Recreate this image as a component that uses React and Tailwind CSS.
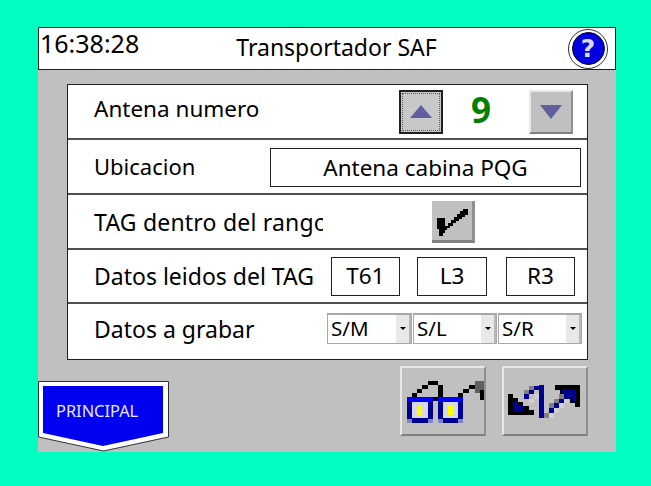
import React from "react";

const GlassesIcon = () => (
  <svg width="82" height="66" viewBox="2 2 82 66" shapeRendering="crispEdges">
    <path fill="#000" d="M28 15h10v4H28z M22 19h6v4h-6z M17 23h5v4h-5z M12 27h5v4h-5z M38 19h5v12h-5z M33 31h5v4h-5z M58 27h5v4h-5z M63 23h6v4h-6z M69 19h6v4h-6z" />
    <path fill="#606060" d="M75 15h9v9h-9z M75 24h5v3h-5z" />
    <path fill="#000" d="M80 24h4v10h-4z" />
    <path fill="#0000ff" d="M7 31h26v5H7z M38 31h25v5H38z" />
    <path fill="#000090" d="M7 36h5v17H7z M28 36h5v17h-5z M38 36h5v17h-5z M58 36h5v17h-5z M12 52h16v5H12z M43 52h15v5H43z" />
    <path fill="#7f86b8" d="M7 53h5v4H7z M28 53h5v4h-5z M38 53h5v4h-5z M58 53h5v4h-5z" />
    <path fill="#d4d8e8" d="M12 36h16v16H12z M43 36h15v16H43z" />
    <path fill="#ffff00" d="M17 40h5v9h-5z M48 40h6v9h-6z" />
  </svg>
);

const ArrowsIcon = () => (
  <svg width="82" height="66" viewBox="2 2 82 66" shapeRendering="crispEdges">
    <path fill="#000" d="M6 28h5v4h5v4h5v4h6v4h5v5H6z M53 19h25v22h-5v-4h-5v-4h-5v-4h-5v-5h-5v-5h-5z" />
    <path fill="#000090" d="M11 36h5v4h5v5H11z M60 23h14v12h-4v-4h-5v-4h-5z" />
    <path fill="#d0d0d0" d="M27 33h5v4h-5z M32 28h5v5h-5z M47 47h5v5h-5z M52 42h5v5h-5z M57 37h5v5h-5z M62 33h5v4h-5z" />
    <path fill="#808080" d="M22 24h5v4h-5z M27 20h5v4h-5z M42 47h5v5h-5z M47 37h5v5h-5z M52 33h5v4h-5z M57 28h5v5h-5z" />
    <path fill="#000090" d="M37 19h5v33h-5z M32 20h5v4h-5z M27 24h5v4h-5z M22 28h5v5h-5z M47 42h5v5h-5z M52 37h5v5h-5z M57 33h5v4h-5z M62 28h5v5h-5z" />
  </svg>
);

const CheckIcon = () => (
  <svg width="40" height="38" viewBox="0 0 40 38" shapeRendering="crispEdges">
    <path fill="#000" d="M5 17H13V25H16V22H19V19H22V16H25V13H28V10H31V8H36V14H33V16H30V18H27V20H24V22H21V25H18V27H15V29H13V32H11V35H7V28H5z" />
  </svg>
);

const HelpButton = () => (
  <div className="flex h-[40px] w-[40px] items-center justify-center rounded-full border border-[#303030] bg-white">
    <div
      className="flex h-[33px] w-[33px] items-center justify-center rounded-full border border-black bg-[#0000e0] text-[25px] font-bold leading-none text-[#dcdcf0]"
      style={{ fontFamily: '"DejaVu Sans", sans-serif' }}
    >
      ?
    </div>
  </div>
);

const RaisedButton = ({ className, children }) => (
  <div className={`flex items-center justify-center bg-[#c0c0c0] border-t-2 border-l-2 border-t-[#e8e8e8] border-l-[#e8e8e8] border-b-2 border-r-2 border-b-[#808080] border-r-[#909090] ${className}`}>
    {children}
  </div>
);

const Row = ({ label, labelClass, height = "h-[55px]", children, last }) => (
  <div className={`flex items-center pl-[26px] ${height} ${last ? "" : "border-b-2 border-b-[#505050]"}`}>
    <span className={`overflow-hidden whitespace-nowrap leading-[30px] ${labelClass}`}>{label}</span>
    {children}
  </div>
);

const ValueBox = ({ children, className }) => (
  <div className={`flex h-[39px] items-center justify-center border border-[#202020] bg-white text-[22.5px] ${className}`}>
    {children}
  </div>
);

const Combo = ({ value, className }) => (
  <div className={`flex h-[31px] items-stretch justify-between border border-t-2 border-[#a8a8a8] bg-white ${className}`}>
    <span className="pl-[3px] text-[20.5px] leading-[27px]">{value}</span>
    <div className="flex w-[15px] items-center justify-center border-r-2 border-r-[#b8b8b8] bg-[#e8e8e8]">
      <div className="h-0 w-0 border-x-[3px] border-t-[3px] border-x-transparent border-t-black" />
    </div>
  </div>
);

export default function App() {
  return (
    <div
      className="h-[486px] w-[651px] overflow-hidden bg-[#00ffc0] pl-[38px] pt-[27px] text-black"
      style={{ fontFamily: '"Noto Sans", "Liberation Sans", sans-serif' }}
    >
      <div className="flex h-[425px] w-[578px] flex-col bg-[#c0c0c0]">
        <div className="flex h-[43px] items-center border border-[#202020] bg-white">
          <span className="w-[150px] self-start pl-[1px] text-[25px] leading-[31px]">16:38:28</span>
          <span className="flex-1 pb-[2px] pl-[19px] text-center text-[23px]">Transportador SAF</span>
          <div className="flex w-[150px] justify-end pr-[7px]">
            <HelpButton />
          </div>
        </div>

        <div className="ml-[29px] mt-[14px] w-[521px] border border-[#202020] bg-white">
          <Row label="Antena numero" labelClass="w-[173px] pb-[5px] text-[22.5px]">
            <div className="ml-[132px] flex h-[44px] w-[44px] items-center justify-center border-2 border-[#202020] bg-[#c8c8c8] outline-1 -outline-offset-4 outline-dotted outline-[#606060]">
              <div className="h-0 w-0 border-x-[11px] border-b-[13px] border-x-transparent border-b-[#5f5f9f]" />
            </div>
            <span className="ml-[28px] w-[58px] pb-[5px] text-[35px] font-bold leading-none text-[#008000]">9</span>
            <RaisedButton className="h-[44px] w-[44px]">
              <div className="h-0 w-0 border-x-[11px] border-t-[14px] border-x-transparent border-t-[#5f5f9f]" />
            </RaisedButton>
          </Row>

          <Row label="Ubicacion" labelClass="w-[173px] pb-[2px] text-[22px]">
            <ValueBox className="ml-[3px] mt-[2px] w-[311px]">Antena cabina PQG</ValueBox>
          </Row>

          <Row label="TAG dentro del rango" labelClass="w-[229px] text-[23px] tracking-[0.2px]">
            <div className="ml-[109px] flex h-[42px] w-[43px] items-center justify-center border-b-[3px] border-r-[3px] border-b-[#808080] border-r-[#909090] bg-[#c0c0c0]">
              <CheckIcon />
            </div>
          </Row>

          <Row label="Datos leidos del TAG" labelClass="w-[237px] pb-[1px] text-[23px]" height="h-[54px]">
            <ValueBox className="w-[69px]">T61</ValueBox>
            <ValueBox className="ml-[17px] w-[70px]">L3</ValueBox>
            <ValueBox className="ml-[19px] w-[69px]">R3</ValueBox>
          </Row>

          <Row label="Datos a grabar" labelClass="w-[173px] pb-[5px] text-[23px]" last>
            <div className="mb-[7px] ml-[60px] flex gap-[1px]">
              <Combo value="S/M" className="w-[85px]" />
              <Combo value="S/L" className="w-[84px]" />
              <Combo value="S/R" className="w-[84px]" />
            </div>
          </Row>
        </div>

        <div className="flex flex-1 items-end justify-between pb-[16px]">
          <svg width="132" height="71" viewBox="0 0 132 71" className="mb-[-16px]">
            <path d="M0.5 0.5H130.5V56L65.5 70L0.5 56Z" fill="#fff" stroke="#303030" strokeWidth="1" />
            <path d="M5 5H125V52L65 65L5 52Z" fill="#0000f0" />
            <text x="18" y="35.5" fontSize="16.4" fill="#e8e8ff" fontFamily="Noto Sans">PRINCIPAL</text>
          </svg>
          <div className="mr-[28px] flex gap-[16px]">
            <RaisedButton className="h-[70px] w-[86px]"><GlassesIcon /></RaisedButton>
            <RaisedButton className="h-[70px] w-[86px]"><ArrowsIcon /></RaisedButton>
          </div>
        </div>
      </div>
    </div>
  );
}
